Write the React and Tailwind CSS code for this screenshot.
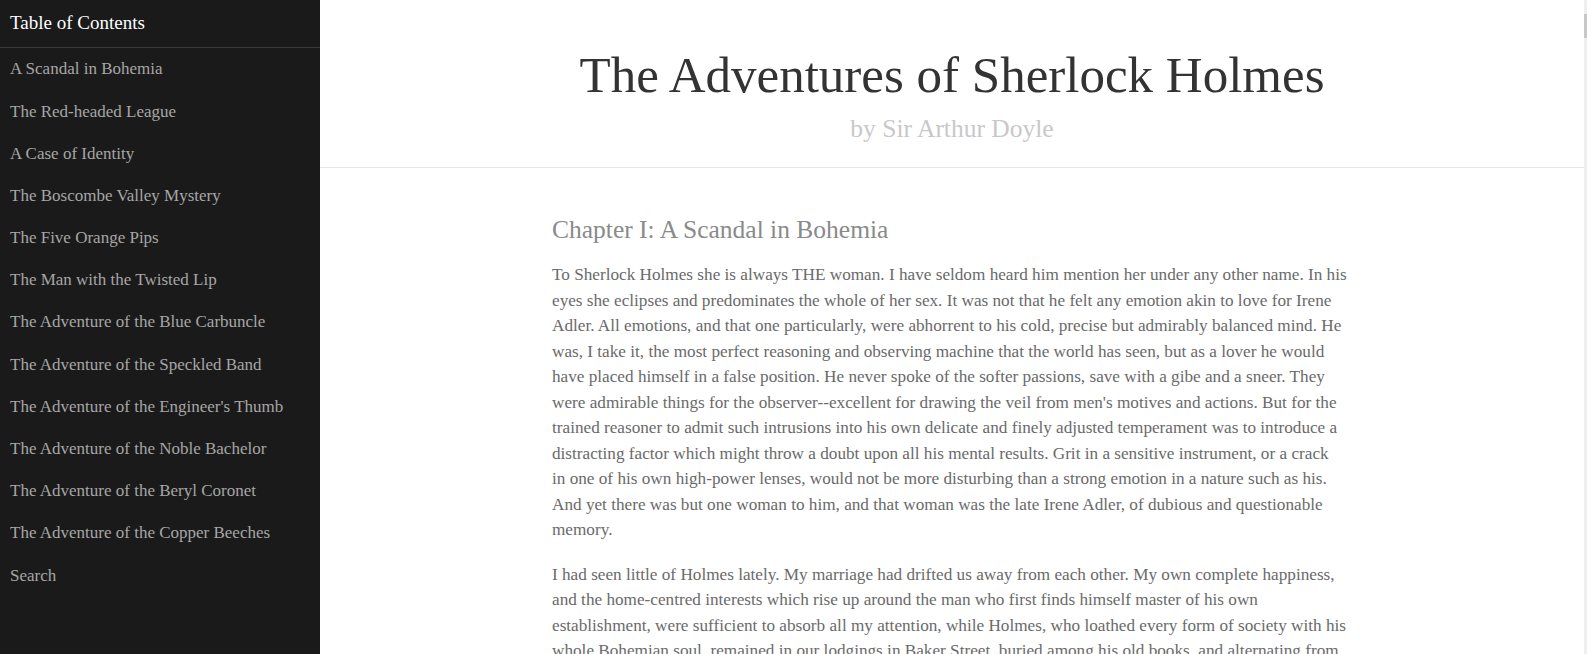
import { useState } from "react";

const chapters = [
  "A Scandal in Bohemia",
  "The Red-headed League",
  "A Case of Identity",
  "The Boscombe Valley Mystery",
  "The Five Orange Pips",
  "The Man with the Twisted Lip",
  "The Adventure of the Blue Carbuncle",
  "The Adventure of the Speckled Band",
  "The Adventure of the Engineer's Thumb",
  "The Adventure of the Noble Bachelor",
  "The Adventure of the Beryl Coronet",
  "The Adventure of the Copper Beeches",
  "Search",
];

const paragraphs = [
  "To Sherlock Holmes she is always THE woman. I have seldom heard him mention her under any other name. In his eyes she eclipses and predominates the whole of her sex. It was not that he felt any emotion akin to love for Irene Adler. All emotions, and that one particularly, were abhorrent to his cold, precise but admirably balanced mind. He was, I take it, the most perfect reasoning and observing machine that the world has seen, but as a lover he would have placed himself in a false position. He never spoke of the softer passions, save with a gibe and a sneer. They were admirable things for the observer--excellent for drawing the veil from men's motives and actions. But for the trained reasoner to admit such intrusions into his own delicate and finely adjusted temperament was to introduce a distracting factor which might throw a doubt upon all his mental results. Grit in a sensitive instrument, or a crack in\u00a0one of his own high-power lenses, would not be more disturbing than a strong emotion in a nature such as his. And yet there was but one woman to him, and that woman was the late Irene Adler, of dubious and questionable memory.",
  "I had seen little of Holmes lately. My marriage had drifted us away from each other. My own complete happiness, and the home-centred interests which rise up around the man who first finds himself master of his own establishment, were sufficient to absorb all my attention, while Holmes, who loathed every form of society with his whole Bohemian soul, remained in our lodgings in Baker Street, buried among his old books, and alternating from week to week between cocaine and ambition, the drowsiness of the drug, and the fierce energy of his own keen nature.",
];

const Sidebar = ({ active, onSelect }) => {
  return (
    <aside className="w-[320px] shrink-0 bg-[#1a1a1a] h-full">
      <div className="h-[48px] px-[10px] pb-[2px] flex items-center border-b border-[#3a3a3a]">
        <h2 className="text-white text-[19px] leading-none">Table of Contents</h2>
      </div>
      <ul>
        {chapters.map((c, i) => (
          <li key={c}>
            <button
              onClick={() => onSelect(i)}
              className="w-full text-left h-[42.2px] px-[10px] text-[17px] text-[#a6a6a6] hover:text-white"
            >
              {c}
            </button>
          </li>
        ))}
      </ul>
    </aside>
  );
};

const App = () => {
  const [active, setActive] = useState(0);

  return (
    <div
      className="flex h-screen overflow-hidden bg-white"
      style={{ fontFamily: '"Liberation Serif", "DejaVu Serif", serif' }}
    >
      <Sidebar active={active} onSelect={setActive} />

      <main className="flex-1 min-w-0 h-full">
        <header className="bg-white border-b border-[#e6e6e6] pt-[40px] pb-[20px] text-center">
          <h1 className="text-[51px] leading-[71px] text-[#333]">The Adventures of Sherlock Holmes</h1>
          <p className="text-[25.5px] leading-[36px] text-[#c8c8c8]">by Sir Arthur Doyle</p>
        </header>

        <article className="max-w-[800px] mx-auto pt-[47px]">
          <h3 className="text-[25.5px] leading-[30px] text-[#8a8a8a] mb-[17px]">
            Chapter I: A Scandal in Bohemia
          </h3>
          {paragraphs.map((p, i) => (
            <p key={i} className="text-[17.2px] leading-[25.5px] text-[#6a6a6a] mb-[19px]">
              {p}
            </p>
          ))}
        </article>
      </main>

      <div className="w-[3px] shrink-0 bg-[#efefef] h-full">
        <div className="mt-[14px] h-[24px] bg-[#c8c8c8]" />
      </div>
    </div>
  );
};

export default App;
